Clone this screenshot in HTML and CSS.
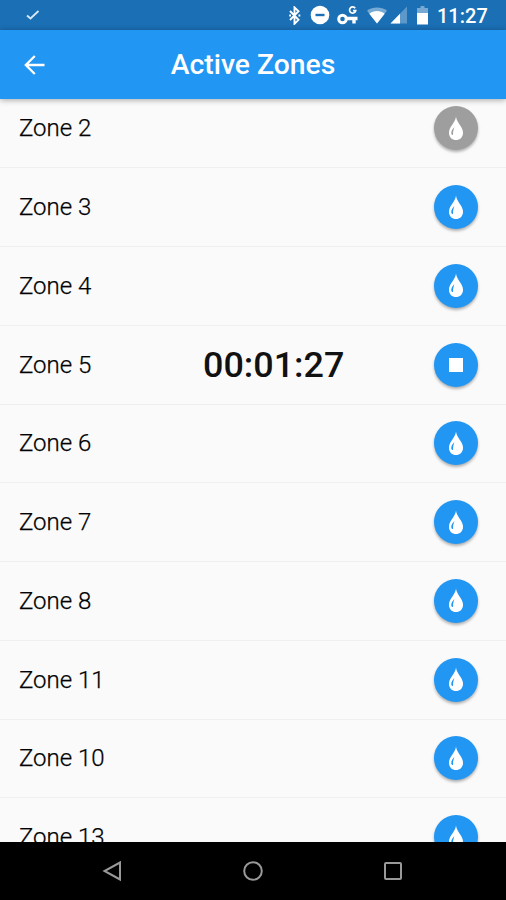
FILE: index.html
```
<!DOCTYPE html>
<html lang="en">
<head>
  <meta charset="UTF-8" />
  <meta name="viewport" content="width=device-width, initial-scale=1.0" />
  <title>Active Zones</title>
  <link rel="stylesheet" href="styles.css">
</head>
<body>
  <svg class="symbols">
    <symbol id="drop" viewBox="0 0 16 26">
      <path fill="#fff" d="M8 .5c.6 6.500 7.300 10.500 7.300 16.900C15.300 22.200 12 25 8 25S.7 22.200 .7 17.400C.7 11 7.400 7 8 .5z" />
      <path class="glint" d="M6.300 11.500C4 14 2.900 16 3.100 18.300c.2 1.300 1 1.700 1.800 1.200C4.800 16.500 5.500 14 6.300 11.500z" />
    </symbol>
  </svg>

  <div class="phone">
    <div class="status-bar">
      <svg class="check" viewBox="0 0 14 10"><path d="M1 5.500l3.500 3L12.500 1" /></svg>
      <div class="status-icons">
        <svg class="bluetooth" width="13" height="19" viewBox="0 0 13 19"><path d="M2 5l8.500 8.800-4 4V1.400l4 3.800L2 14" /><path d="M1.200 9.500h1.800M10.500 9.500h1.800" /></svg>
        <svg class="dnd" width="20" height="20" viewBox="0 0 20 20"><circle cx="10" cy="10" r="9.300" fill="#fff" /><path d="M5.500 10h9" stroke="#1a6fb5" stroke-width="2.400" /></svg>
        <svg class="vpn" width="22" height="20" viewBox="0 0 22 20">
          <circle cx="5.500" cy="14" r="3.800" fill="none" stroke="#fff" stroke-width="3" />
          <path d="M9 13.500h11.500M17 13v5.500" fill="none" stroke="#fff" stroke-width="3.400" />
          <path d="M18.200 3.200a3.100 3.100 0 1 0 .5 2.500h-2.700" fill="none" stroke="#fff" stroke-width="1.700" />
        </svg>
        <svg class="wifi" width="20" height="17" viewBox="0 0 20 17"><path fill="#76a9d3" d="M0 3.800C5.500-.6 14.500-.6 20 3.800L10 16.500z" /><path fill="#fff" d="M2.300 6.800c4.500-3.600 10.900-3.600 15.400 0L10 16.500z" /></svg>
        <svg class="signal" width="18" height="18" viewBox="0 0 18 18"><path fill="#5c98c9" d="M17 .5v17H.5z" /><path fill="#fff" d="M10 7.700v9.800H.5z" /></svg>
        <svg class="battery" width="11" height="19" viewBox="0 0 11 19"><path fill="#76a9d3" d="M3.500 0h4v2H11v5H0V2h3.500z" /><path fill="#fff" d="M0 7h11v11.500H0z" /></svg>
        <span class="clock">11:27</span>
      </div>
    </div>

    <div class="app-bar">
      <svg class="back" viewBox="0 0 22 22"><path d="M20.500 11H2.500M10.800 2L1.800 11l9 9" /></svg>
      <h1>Active Zones</h1>
    </div>

    <div class="zones">
      <div class="zone"><span class="name">Zone 2</span><button class="off"><svg><use href="#drop" /></svg></button></div>
      <div class="zone"><span class="name">Zone 3</span><button><svg><use href="#drop" /></svg></button></div>
      <div class="zone"><span class="name">Zone 4</span><button><svg><use href="#drop" /></svg></button></div>
      <div class="zone"><span class="name">Zone 5</span><span class="timer">00:01:27</span><button><span class="stop"></span></button></div>
      <div class="zone"><span class="name">Zone 6</span><button><svg><use href="#drop" /></svg></button></div>
      <div class="zone"><span class="name">Zone 7</span><button><svg><use href="#drop" /></svg></button></div>
      <div class="zone"><span class="name">Zone 8</span><button><svg><use href="#drop" /></svg></button></div>
      <div class="zone"><span class="name">Zone 11</span><button><svg><use href="#drop" /></svg></button></div>
      <div class="zone"><span class="name">Zone 10</span><button><svg><use href="#drop" /></svg></button></div>
      <div class="zone"><span class="name">Zone 13</span><button><svg><use href="#drop" /></svg></button></div>
    </div>

    <div class="nav-bar">
      <svg viewBox="0 0 22 22"><path d="M18 2.500v17L2.500 11z" /></svg>
      <svg viewBox="0 0 22 22"><circle cx="11" cy="11" r="8.800" /></svg>
      <svg viewBox="0 0 22 22"><rect x="3" y="3" width="16" height="16" rx="1" /></svg>
    </div>
  </div>
</body>
</html>
```

FILE: styles.css
```
body {
  margin: 0;
  font-family: Roboto, sans-serif;
  background-color: #fafafa;
}

.symbols {
  display: none;
}

.phone {
  display: flex;
  flex-direction: column;
  height: 900px;
  overflow: hidden;
}

.status-bar {
  display: flex;
  justify-content: space-between;
  align-items: center;
  flex: none;
  box-sizing: border-box;
  height: 30px;
  padding: 0 19px 0 26px;
  background-color: #1a6fb5;
  color: #fff;
}

.check {
  width: 14px;
  height: 10px;
  fill: none;
  stroke: #d9e9f6;
  stroke-width: 1.8;
}

.status-icons {
  display: flex;
  align-items: center;
}

.bluetooth {
  fill: none;
  stroke: #fff;
  stroke-width: 1.9;
  margin-right: 9px;
}

.dnd {
  margin-right: 7px;
}

.vpn {
  margin-right: 8px;
}

.wifi {
  margin-right: 3px;
}

.signal {
  margin-right: 9px;
}

.battery {
  margin-right: 9px;
}

.clock {
  width: 50px;
  font-size: 20px;
  font-weight: 500;
  line-height: 30px;
  padding-top: 2px;
}

.app-bar {
  position: relative;
  z-index: 1;
  display: flex;
  align-items: center;
  flex: none;
  height: 69px;
  padding: 0 24px;
  background-color: #2196f3;
  color: #fff;
  box-shadow: 0 1px 6px rgba(0, 0, 0, 0.35);
}

.back {
  width: 22px;
  height: 22px;
  fill: none;
  stroke: #fff;
  stroke-width: 2.3;
}

.app-bar h1 {
  flex: 1;
  margin: 0 22px 0 0;
  font-size: 28.3px;
  font-weight: 500;
  text-align: center;
}

.zones {
  flex: 1;
  display: flex;
  flex-direction: column;
  justify-content: flex-end;
  min-height: 0;
  margin-bottom: -35px;
}

.zone {
  display: grid;
  grid-template-columns: 184px 1fr 44px;
  align-items: center;
  flex: none;
  box-sizing: border-box;
  height: 78.75px;
  padding: 0 28px 0 19px;
  border-bottom: 1px solid #efefef;
}

.name {
  font-size: 24px;
  font-weight: 300;
  color: #000;
  -webkit-text-stroke: 0.25px #000;
}

.timer {
  font-size: 35.9px;
  font-weight: 500;
  color: #111;
}

button {
  grid-column: 3;
  display: flex;
  align-items: center;
  justify-content: center;
  width: 44px;
  height: 44px;
  padding: 0;
  border: none;
  border-radius: 50%;
  background-color: #2196f3;
  color: #2196f3;
  box-shadow: 0 2px 3px rgba(0, 0, 0, 0.3);
}

button.off {
  background-color: #9e9e9e;
  color: #9e9e9e;
}

button svg {
  width: 16px;
  height: 25px;
}

.glint {
  fill: currentColor;
}

.stop {
  width: 14px;
  height: 14px;
  background-color: #fff;
}

.nav-bar {
  position: relative;
  z-index: 1;
  display: flex;
  align-items: center;
  justify-content: center;
  gap: 118px;
  flex: none;
  height: 58px;
  background-color: #000;
}

.nav-bar svg {
  width: 22px;
  height: 22px;
  fill: none;
  stroke: #999;
  stroke-width: 2;
}
```
